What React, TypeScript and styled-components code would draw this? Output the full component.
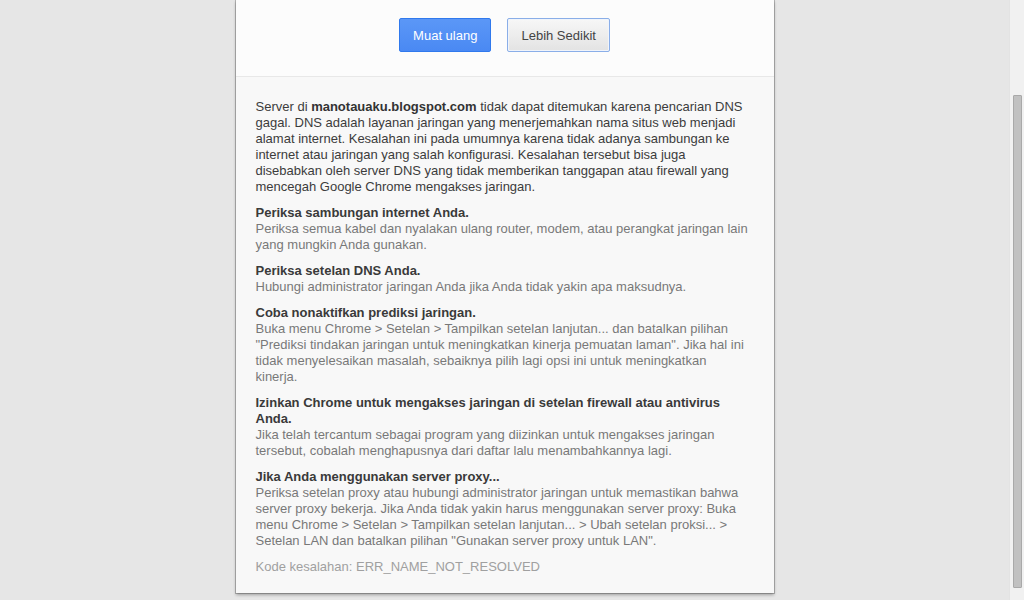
import React from "react";
import styled, { createGlobalStyle } from "styled-components";

const Global = createGlobalStyle`
  html, body { margin: 0; padding: 0; height: 100%; overflow: hidden; }
  body { font-family: "Liberation Sans", Arial, sans-serif; }
  #root { height: 100%; }
`;

const Screen = styled.div`
  display: flex;
  height: 600px;
  width: 1024px;
  background: #e6e6e6;
  overflow: hidden;
`;

const Viewport = styled.main`
  flex: 1;
  display: flex;
  justify-content: center;
  align-items: flex-start;
`;

const Card = styled.div`
  width: 538px;
  box-sizing: border-box;
  background: #f8f8f8;
  box-shadow: 0 0 0 1px rgba(0, 0, 0, 0.22), 0 2px 3px rgba(0, 0, 0, 0.3);
`;

const ButtonBar = styled.div`
  display: flex;
  justify-content: center;
  gap: 16px;
  height: 77px;
  box-sizing: border-box;
  padding-top: 18px;
  background: #fcfcfc;
  border-bottom: 1px solid #e8e8e8;
`;

const Button = styled.button<{ $primary?: boolean }>`
  height: 34px;
  padding: 0 13px;
  border-radius: 2px;
  font-family: "Liberation Sans", Arial, sans-serif;
  font-size: 13px;
  cursor: pointer;
  border: 1px solid ${(p) => (p.$primary ? "#3079ed" : "#8aaee8")};
  color: ${(p) => (p.$primary ? "#fff" : "#444")};
  background: ${(p) =>
    p.$primary
      ? "linear-gradient(#5b97f7, #4a89f3)"
      : "linear-gradient(#f7f7f7, #e3e3e3)"};
  box-shadow: ${(p) => (p.$primary ? "none" : "inset 0 0 0 1px #f0f4fb")};
`;

const Details = styled.div`
  padding: 22px 20px 18px;
  font-size: 13px;
  line-height: 16px;
`;

const Intro = styled.p`
  margin: 0 0 10px;
  color: #3c3c3c;
  strong { font-weight: bold; color: #333; }
`;

const Suggestion = styled.section`
  margin-bottom: 10px;
`;

const SuggestionTitle = styled.h4`
  margin: 0;
  font-size: 13px;
  font-weight: bold;
  color: #3a3a3a;
`;

const SuggestionBody = styled.p`
  margin: 0;
  color: #787878;
`;

const ErrorCode = styled.div`
  color: #a0a0a0;
`;

const ScrollTrack = styled.aside`
  width: 15px;
  flex: none;
  box-sizing: border-box;
  background: #f1f1f1;
  border-left: 1px solid #e3e3e3;
  padding: 95px 2px 12px 3px;
  display: flex;
`;

const ScrollThumb = styled.div`
  flex: 1;
  background: #c1c1c1;
  border: 1px solid #a9a9a9;
  border-radius: 1px;
`;

const suggestions: { title: string; body: React.ReactNode }[] = [
  {
    title: "Periksa sambungan internet Anda.",
    body: "Periksa semua kabel dan nyalakan ulang router, modem, atau perangkat jaringan lain yang mungkin Anda gunakan.",
  },
  {
    title: "Periksa setelan DNS Anda.",
    body: "Hubungi administrator jaringan Anda jika Anda tidak yakin apa maksudnya.",
  },
  {
    title: "Coba nonaktifkan prediksi jaringan.",
    body: (
      <>
        Buka menu Chrome &gt; Setelan &gt; Tampilkan setelan lanjutan... dan batalkan pilihan
        "Prediksi tindakan jaringan untuk meningkatkan kinerja pemuatan laman". Jika hal ini
        tidak menyelesaikan masalah, sebaiknya pilih lagi opsi ini untuk meningkatkan
        <br />
        kinerja.
      </>
    ),
  },
  {
    title: "Izinkan Chrome untuk mengakses jaringan di setelan firewall atau antivirus Anda.",
    body: "Jika telah tercantum sebagai program yang diizinkan untuk mengakses jaringan tersebut, cobalah menghapusnya dari daftar lalu menambahkannya lagi.",
  },
  {
    title: "Jika Anda menggunakan server proxy...",
    body: 'Periksa setelan proxy atau hubungi administrator jaringan untuk memastikan bahwa server proxy bekerja. Jika Anda tidak yakin harus menggunakan server proxy: Buka menu Chrome > Setelan > Tampilkan setelan lanjutan... > Ubah setelan proksi... > Setelan LAN dan batalkan pilihan "Gunakan server proxy untuk LAN".',
  },
];

export default function App() {
  return (
    <>
      <Global />
      <Screen>
        <Viewport>
          <Card>
            <ButtonBar>
              <Button $primary>Muat ulang</Button>
              <Button>Lebih Sedikit</Button>
            </ButtonBar>
            <Details>
              <Intro>
                Server di <strong>manotauaku.blogspot.com</strong> tidak dapat ditemukan karena
                pencarian DNS gagal. DNS adalah layanan jaringan yang menerjemahkan nama situs web
                menjadi alamat internet. Kesalahan ini pada umumnya karena tidak adanya sambungan ke
                internet atau jaringan yang salah konfigurasi. Kesalahan tersebut bisa juga
                disebabkan oleh server DNS yang tidak memberikan tanggapan atau firewall yang
                mencegah Google Chrome mengakses jaringan.
              </Intro>
              {suggestions.map((s) => (
                <Suggestion key={s.title}>
                  <SuggestionTitle>{s.title}</SuggestionTitle>
                  <SuggestionBody>{s.body}</SuggestionBody>
                </Suggestion>
              ))}
              <ErrorCode>Kode kesalahan: ERR_NAME_NOT_RESOLVED</ErrorCode>
            </Details>
          </Card>
        </Viewport>
        <ScrollTrack>
          <ScrollThumb />
        </ScrollTrack>
      </Screen>
    </>
  );
}
